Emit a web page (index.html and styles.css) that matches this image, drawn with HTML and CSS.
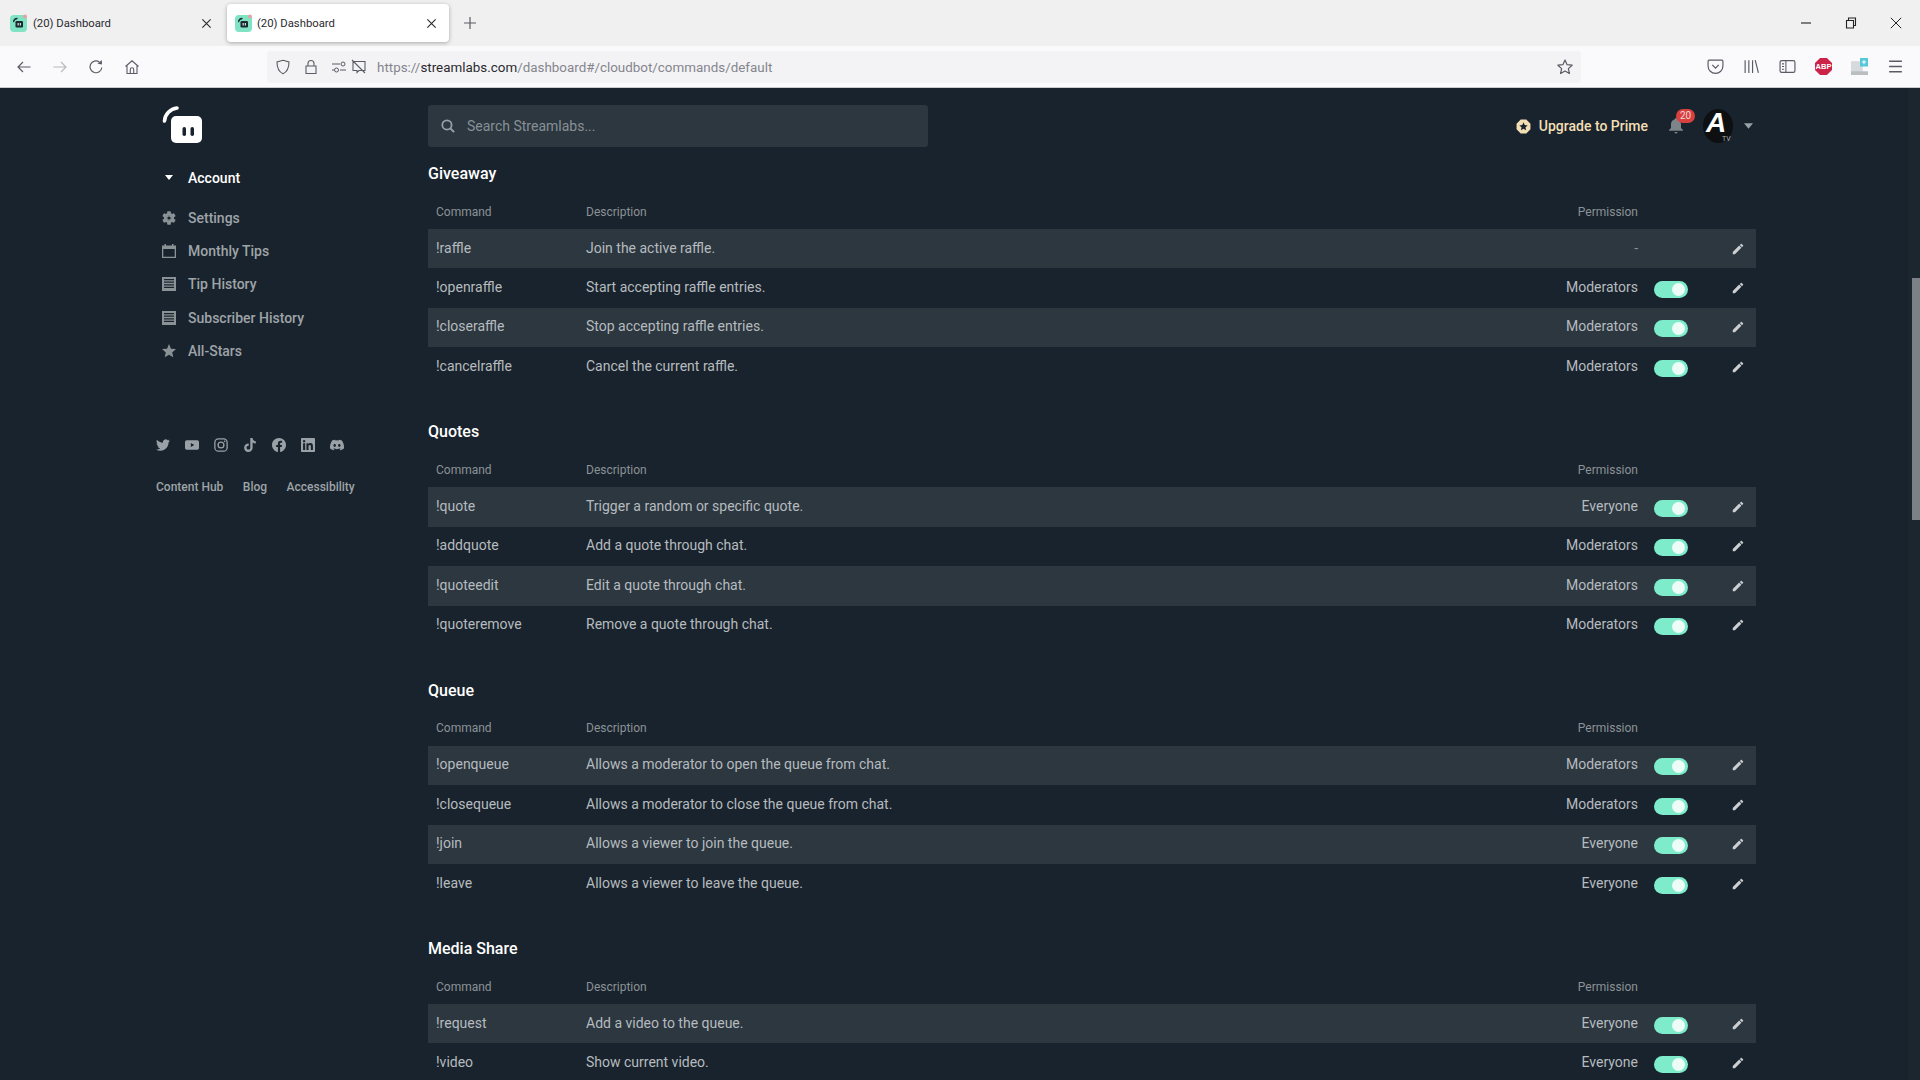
FILE: index.html
```html
<!DOCTYPE html>
<html lang="en">
<head>
<meta charset="utf-8">
<title>(20) Dashboard</title>
<link rel="stylesheet" href="styles.css">
</head>
<body>
<svg class="defs" aria-hidden="true">
  <symbol id="pencil" viewBox="0 0 24 24"><path d="M3 17.25V21h3.75L17.81 9.94l-3.75-3.75L3 17.25zM20.71 7.04c.39-.39.39-1.02 0-1.41l-2.34-2.34c-.39-.39-1.02-.39-1.41 0l-1.83 1.83 3.75 3.75 1.83-1.83z"/></symbol>
  <symbol id="list" viewBox="0 0 14 14"><path fill-rule="evenodd" d="M0 0h14v14H0zM2 2v1.2h10V2zM2 4.6v1.2h10V4.6zM2 7.2v1.2h10V7.2zM2 9.8V11h10V9.8z"/></symbol>
  <symbol id="favicon" viewBox="0 0 19 19"><rect y="1" width="17" height="17" rx="4" fill="#7fe3c4"/><rect x="5.500" y="7" width="7.500" height="6.500" rx="1.300" fill="#1b2a30"/><path d="M3.600 7.500A4 4 0 0 1 7 4.500" fill="none" stroke="#1b2a30" stroke-width="1.300" stroke-linecap="round"/><rect x="7.600" y="9" width="1.100" height="2.500" fill="#e8f5f1"/><rect x="9.800" y="9" width="1.100" height="2.500" fill="#e8f5f1"/><circle cx="15" cy="2.500" r="1.900" fill="#e8a0a0"/></symbol>
  <symbol id="close" viewBox="0 0 12 12"><path d="M1.500 1.500l9 9M10.500 1.500l-9 9" fill="none" stroke="currentColor" stroke-width="1.200"/></symbol>
</svg>

<header class="browser">
  <div class="tabbar">
    <div class="tab">
      <svg class="favicon"><use href="#favicon"/></svg>
      <span class="tab-title">(20) Dashboard</span>
      <svg class="tab-close"><use href="#close"/></svg>
    </div>
    <div class="tab tab-active">
      <svg class="favicon"><use href="#favicon"/></svg>
      <span class="tab-title">(20) Dashboard</span>
      <svg class="tab-close"><use href="#close"/></svg>
    </div>
    <svg class="new-tab" viewBox="0 0 14 14"><path d="M7 1v12M1 7h12" fill="none" stroke="#5b5b66" stroke-width="1.200"/></svg>
    <div class="window-controls">
      <svg class="win-ic" viewBox="0 0 12 12"><path d="M1 6h10" stroke="#222" stroke-width="1.100"/></svg>
      <svg class="win-ic" viewBox="0 0 12 12"><path d="M1.500 3.500h7v7.500h-7zM3.500 3.500V1h7v7.500H8.500" fill="none" stroke="#222" stroke-width="1.100"/></svg>
      <svg class="win-ic" viewBox="0 0 12 12"><path d="M.8.8l10.400 10.400M11.200.8L.8 11.200" fill="none" stroke="#222" stroke-width="1"/></svg>
    </div>
  </div>
  <div class="toolbar">
    <div class="nav-buttons">
      <svg class="tb-ic" viewBox="0 0 16 16"><path d="M14.500 8H2M7 3L2 8l5 5" fill="none" stroke="#5b5b66" stroke-width="1.200"/></svg>
      <svg class="tb-ic tb-dim" viewBox="0 0 16 16"><path d="M1.500 8H14M9 3l5 5-5 5" fill="none" stroke="#5b5b66" stroke-width="1.200"/></svg>
      <svg class="tb-ic" viewBox="0 0 16 16"><path d="M13.800 8.500A5.900 5.900 0 1 1 11.300 3" fill="none" stroke="#5b5b66" stroke-width="1.200"/><path d="M9.500 4.800L14 5.500 13.800 1z" fill="#5b5b66"/></svg>
      <svg class="tb-ic" viewBox="0 0 16 16"><path d="M1.500 7.500L8 1.800l6.500 5.700M3 6.500V14.500h10V6.500M6.300 14.500V10.500a1.700 1.700 0 0 1 3.400 0v4" fill="none" stroke="#5b5b66" stroke-width="1.100"/></svg>
    </div>
    <div class="urlbar">
      <svg class="url-ic" viewBox="0 0 16 16"><path d="M8 1.200l6 1.800c0 6-1.500 9.700-6 11.800C3.500 12.700 2 9 2 3z" fill="none" stroke="#5b5b66" stroke-width="1.100"/></svg>
      <svg class="url-ic url-lock" viewBox="0 0 16 16"><path d="M3 7h10v7.500H3zM5 7V4.500a3 3 0 0 1 6 0V7" fill="none" stroke="#5b5b66" stroke-width="1.100"/></svg>
      <svg class="url-ic url-perm" viewBox="0 0 16 16"><path d="M1 5h8M1 11h2M9 11h6" fill="none" stroke="#5b5b66" stroke-width="1.100"/><circle cx="12" cy="5" r="2" fill="none" stroke="#5b5b66"/><circle cx="5.500" cy="11" r="2" fill="none" stroke="#5b5b66"/></svg>
      <svg class="url-ic url-media" viewBox="0 0 16 16"><path d="M2 2.500h12v9H8l-2 2v-2H2zM1 1l13 13" fill="none" stroke="#5b5b66" stroke-width="1.100"/></svg>
      <span class="url-text">https://<b class="url-host">streamlabs.com</b>/dashboard#/cloudbot/commands/default</span>
      <svg class="url-star" viewBox="0 0 24 24"><path d="M12 2.800l2.800 6.100 6.700.7-5 4.500 1.400 6.600L12 17.400l-5.900 3.300 1.400-6.600-5-4.500 6.700-.7z" fill="none" stroke="#5b5b66" stroke-width="1.600" stroke-linejoin="round"/></svg>
    </div>
    <div class="extensions">
      <svg class="ext-ic" viewBox="0 0 16 16"><path d="M2 2h12a1 1 0 0 1 1 1v4.500a7 7 0 0 1-14 0V3a1 1 0 0 1 1-1z" fill="none" stroke="#5b5b66" stroke-width="1.100"/><path d="M5 6.500l3 3 3-3" fill="none" stroke="#5b5b66" stroke-width="1.200"/></svg>
      <svg class="ext-ic" viewBox="0 0 16 16"><path d="M2 2v12M5.500 2v12M9 2v12M11.500 2l3 12" fill="none" stroke="#5b5b66" stroke-width="1.100"/></svg>
      <svg class="ext-ic" viewBox="0 0 16 16"><rect x="1" y="2.500" width="14" height="11" rx="1.500" fill="none" stroke="#5b5b66" stroke-width="1.100"/><path d="M6.500 2.500v11M2.800 5.500h2M2.800 8h2M2.800 10.500h2" fill="none" stroke="#5b5b66"/></svg>
      <span class="abp">ABP</span>
      <svg class="ext-ic" viewBox="0 0 16 16"><path d="M0 3h11v13H0z" fill="#d5dadc"/><path d="M0 12.500h16V16H0z" fill="#b9bec1"/><rect x="8.500" y="0" width="7.500" height="8" fill="#55c8d8"/><path d="M12.200 1.800v4M10.200 3.800h4" stroke="#fff"/></svg>
      <svg class="ext-ic" viewBox="0 0 16 16"><path d="M2 3h12M2 8h12M2 13h12" fill="none" stroke="#5b5b66" stroke-width="1.400"/></svg>
    </div>
  </div>
</header>

<div class="page">
  <aside class="sidebar">
    <svg class="logo" viewBox="0 0 42 40"><rect x="9" y="11" width="31" height="27" rx="5" fill="#fff"/><rect x="20.500" y="22" width="3.500" height="9" rx="1.700" fill="#19232d"/><rect x="28.500" y="22" width="3.500" height="9" rx="1.700" fill="#19232d"/><path d="M2.500 16A14 14 0 0 1 15 3" fill="none" stroke="#fff" stroke-width="3.600" stroke-linecap="round"/></svg>
    <nav class="menu">
      <a class="menu-item menu-head"><svg class="menu-caret" viewBox="0 0 10 6"><path d="M1 0h8L5 5z" fill="#fff"/></svg><span>Account</span></a>
      <a class="menu-item"><svg class="menu-ic" viewBox="2 2 20 20"><path d="M19.140 12.940c.04-.3.06-.61.06-.94 0-.32-.02-.64-.07-.94l2.030-1.580c.18-.14.23-.41.12-.61l-1.920-3.320c-.12-.22-.37-.29-.59-.22l-2.390.96c-.5-.38-1.030-.7-1.620-.94l-.36-2.540c-.04-.24-.24-.41-.48-.41h-3.840c-.24 0-.43.17-.47.41l-.36 2.540c-.59.24-1.130.57-1.620.94l-2.390-.96c-.22-.08-.47 0-.59.22L2.740 8.870c-.12.21-.08.47.12.61l2.030 1.580c-.05.3-.09.63-.09.94s.02.64.07.94l-2.030 1.580c-.18.14-.23.41-.12.61l1.920 3.320c.12.22.37.29.59.22l2.390-.96c.5.38 1.030.7 1.620.94l.36 2.540c.05.24.24.41.48.41h3.840c.24 0 .44-.17.47-.41l.36-2.540c.59-.24 1.130-.56 1.620-.94l2.390.96c.22.08.47 0 .59-.22l1.920-3.320c.12-.22.07-.47-.12-.61l-2.010-1.580zM12 15.600c-1.980 0-3.600-1.620-3.600-3.600s1.620-3.600 3.600-3.600 3.600 1.620 3.600 3.600-1.620 3.600-3.600 3.600z"/><circle cx="12" cy="12" r="4"/><circle class="gear-hole" cx="12" cy="12" r="2.300"/></svg><span>Settings</span></a>
      <a class="menu-item"><svg class="menu-ic" viewBox="0 0 14 14"><path fill-rule="evenodd" d="M2.500 0h1.500v1.500h6V0h1.500v1.500H14V14H0V1.500h2.500zM1.300 5v7.700h11.400V5z"/></svg><span>Monthly Tips</span></a>
      <a class="menu-item"><svg class="menu-ic"><use href="#list"/></svg><span>Tip History</span></a>
      <a class="menu-item"><svg class="menu-ic"><use href="#list"/></svg><span>Subscriber History</span></a>
      <a class="menu-item"><svg class="menu-ic" viewBox="2 2 20 20"><path d="M12 17.270L18.180 21l-1.640-7.030L22 9.240l-7.190-.61L12 2 9.190 8.630 2 9.240l5.460 4.730L5.820 21z"/></svg><span>All-Stars</span></a>
    </nav>
    <div class="socials">
      <svg class="social" viewBox="0 0 24 24"><path d="M23.950 4.570a10 10 0 0 1-2.820.77 4.960 4.960 0 0 0 2.160-2.720c-.95.55-2 .95-3.120 1.180a4.920 4.920 0 0 0-8.380 4.480C7.690 8.100 4.070 6.130 1.640 3.160a4.820 4.820 0 0 0-.66 2.470c0 1.710.87 3.210 2.190 4.100a4.900 4.900 0 0 1-2.230-.62v.06a4.920 4.920 0 0 0 3.950 4.830c-.72.2-1.480.22-2.220.08a4.940 4.940 0 0 0 4.600 3.420A9.870 9.870 0 0 1 0 19.540a13.900 13.900 0 0 0 7.550 2.210c9.060 0 14-7.500 14-13.980 0-.21 0-.42-.02-.63A9.940 9.940 0 0 0 24 4.590z"/></svg>
      <svg class="social" viewBox="0 0 24 24"><path fill-rule="evenodd" d="M3 4h18a3 3 0 0 1 3 3v10a3 3 0 0 1-3 3H3a3 3 0 0 1-3-3V7a3 3 0 0 1 3-3zm7 4.500v7l6-3.500z"/></svg>
      <svg class="social" viewBox="0 0 24 24"><rect x="1.500" y="1.500" width="21" height="21" rx="6" fill="none" stroke="#9aa1a6" stroke-width="2.200"/><circle cx="12" cy="12" r="5" fill="none" stroke="#9aa1a6" stroke-width="2.200"/><circle cx="18.300" cy="5.700" r="1.400"/></svg>
      <svg class="social" viewBox="0 0 24 24"><path d="M12.500 0h4c.2 3 2 5.300 5.500 5.600v4c-2 0-3.900-.6-5.500-1.700v8.600c0 4.200-3.300 7.500-7.500 7.500S2 20.700 2 16.500 5.500 9 9.800 9.300v4.100c-2-.4-3.700 1.100-3.700 3.100 0 1.900 1.500 3.400 3.400 3.400s3-1.400 3-3.400z"/></svg>
      <svg class="social" viewBox="0 0 24 24"><path d="M24 12.070C24 5.400 18.630 0 12 0S0 5.400 0 12.070c0 6.030 4.390 11.020 10.130 11.930v-8.440H7.080v-3.490h3.050V9.410c0-3.020 1.790-4.690 4.530-4.690 1.310 0 2.690.24 2.690.24v2.970h-1.520c-1.490 0-1.950.93-1.950 1.890v2.250h3.330l-.53 3.490h-2.800V24C19.610 23.090 24 18.100 24 12.070z"/></svg>
      <svg class="social" viewBox="0 0 24 24"><path d="M20.450 20.450h-3.550v-5.570c0-1.330-.03-3.040-1.850-3.040-1.850 0-2.140 1.450-2.140 2.940v5.670H9.350V9h3.410v1.560h.05c.48-.9 1.640-1.850 3.370-1.850 3.600 0 4.270 2.370 4.270 5.460v6.280zM5.340 7.430a2.060 2.060 0 1 1 0-4.120 2.060 2.060 0 0 1 0 4.120zM7.120 20.450H3.560V9h3.560v11.450zM22.220 0H1.770C.79 0 0 .77 0 1.730v20.540C0 23.230.79 24 1.770 24h20.450c.98 0 1.780-.77 1.780-1.730V1.730C24 .77 23.200 0 22.220 0z"/></svg>
      <svg class="social" viewBox="0 0 24 24"><path d="M20.320 4.370A19.800 19.800 0 0 0 15.380 2.850a13.900 13.900 0 0 0-.63 1.300 18.300 18.300 0 0 0-5.490 0 12.600 12.600 0 0 0-.64-1.300A19.700 19.700 0 0 0 3.680 4.370C.53 9.050-.32 13.600.1 18.100a19.900 19.900 0 0 0 6.070 3.070c.49-.67.93-1.380 1.300-2.130-.71-.27-1.390-.6-2.030-.98.17-.12.34-.25.5-.38a14.200 14.200 0 0 0 12.120 0c.16.13.33.26.5.38-.64.38-1.330.71-2.040.98.38.75.82 1.460 1.300 2.130a19.900 19.900 0 0 0 6.080-3.070c.5-5.200-.84-9.720-3.580-13.730zM8.020 15.330c-1.180 0-2.160-1.080-2.160-2.420 0-1.330.96-2.420 2.160-2.420 1.210 0 2.180 1.090 2.160 2.420 0 1.340-.95 2.420-2.160 2.420zm7.970 0c-1.180 0-2.150-1.080-2.150-2.420 0-1.330.95-2.420 2.150-2.420 1.220 0 2.180 1.090 2.160 2.420 0 1.340-.94 2.420-2.160 2.420z"/></svg>
    </div>
    <div class="footer-links"><a>Content Hub</a><a>Blog</a><a>Accessibility</a></div>
  </aside>

  <main class="main">
    <div class="topbar">
      <div class="search">
        <svg class="search-ic" viewBox="0 0 16 16"><circle cx="6.800" cy="6.800" r="5.300" fill="none" stroke="#9aa1a6" stroke-width="2"/><path d="M10.800 10.800L15 15" stroke="#9aa1a6" stroke-width="2.200"/></svg>
        <span>Search Streamlabs...</span>
      </div>
      <div class="user-area">
        <svg class="prime-ic" viewBox="0 0 16 16"><path fill-rule="evenodd" d="M5 .6h6l4.400 4.400v6L11 15.400H5L.6 11V5zM8 3.500l1.300 3 3.200.3-2.400 2.100.7 3.100L8 10.400l-2.800 1.600.7-3.100-2.400-2.100 3.200-.3z" fill="#f3dfb5"/></svg>
        <span class="prime-text">Upgrade to Prime</span>
        <div class="bell">
          <svg class="bell-ic" viewBox="0 0 16 16"><path d="M8 0a1.200 1.200 0 0 1 1.200 1.200C11.500 1.800 13 3.700 13 6v4l2 2v.8H1V12l2-2V6c0-2.300 1.500-4.200 3.800-4.800A1.200 1.200 0 0 1 8 0zM6.500 14h3a1.500 1.500 0 0 1-3 0z" fill="#7d858a"/></svg>
          <span class="badge">20</span>
        </div>
        <div class="avatar"><span class="avatar-a">A</span><span class="avatar-tv">TV</span></div>
        <svg class="user-caret" viewBox="0 0 10 6"><path d="M0 0h10L5 6z" fill="#9aa1a6"/></svg>
      </div>
    </div>

    <section class="group group-first">
      <h2>Giveaway</h2>
      <div class="row row-head"><span>Command</span><span>Description</span><span class="perm">Permission</span></div>
      <div class="row"><span>!raffle</span><span>Join the active raffle.</span><span class="perm perm-none">-</span><i></i><svg class="edit"><use href="#pencil"/></svg></div>
      <div class="row"><span>!openraffle</span><span>Start accepting raffle entries.</span><span class="perm">Moderators</span><b class="toggle"></b><svg class="edit"><use href="#pencil"/></svg></div>
      <div class="row"><span>!closeraffle</span><span>Stop accepting raffle entries.</span><span class="perm">Moderators</span><b class="toggle"></b><svg class="edit"><use href="#pencil"/></svg></div>
      <div class="row"><span>!cancelraffle</span><span>Cancel the current raffle.</span><span class="perm">Moderators</span><b class="toggle"></b><svg class="edit"><use href="#pencil"/></svg></div>
    </section>

    <section class="group">
      <h2>Quotes</h2>
      <div class="row row-head"><span>Command</span><span>Description</span><span class="perm">Permission</span></div>
      <div class="row"><span>!quote</span><span>Trigger a random or specific quote.</span><span class="perm">Everyone</span><b class="toggle"></b><svg class="edit"><use href="#pencil"/></svg></div>
      <div class="row"><span>!addquote</span><span>Add a quote through chat.</span><span class="perm">Moderators</span><b class="toggle"></b><svg class="edit"><use href="#pencil"/></svg></div>
      <div class="row"><span>!quoteedit</span><span>Edit a quote through chat.</span><span class="perm">Moderators</span><b class="toggle"></b><svg class="edit"><use href="#pencil"/></svg></div>
      <div class="row"><span>!quoteremove</span><span>Remove a quote through chat.</span><span class="perm">Moderators</span><b class="toggle"></b><svg class="edit"><use href="#pencil"/></svg></div>
    </section>

    <section class="group">
      <h2>Queue</h2>
      <div class="row row-head"><span>Command</span><span>Description</span><span class="perm">Permission</span></div>
      <div class="row"><span>!openqueue</span><span>Allows a moderator to open the queue from chat.</span><span class="perm">Moderators</span><b class="toggle"></b><svg class="edit"><use href="#pencil"/></svg></div>
      <div class="row"><span>!closequeue</span><span>Allows a moderator to close the queue from chat.</span><span class="perm">Moderators</span><b class="toggle"></b><svg class="edit"><use href="#pencil"/></svg></div>
      <div class="row"><span>!join</span><span>Allows a viewer to join the queue.</span><span class="perm">Everyone</span><b class="toggle"></b><svg class="edit"><use href="#pencil"/></svg></div>
      <div class="row"><span>!leave</span><span>Allows a viewer to leave the queue.</span><span class="perm">Everyone</span><b class="toggle"></b><svg class="edit"><use href="#pencil"/></svg></div>
    </section>

    <section class="group">
      <h2>Media Share</h2>
      <div class="row row-head"><span>Command</span><span>Description</span><span class="perm">Permission</span></div>
      <div class="row"><span>!request</span><span>Add a video to the queue.</span><span class="perm">Everyone</span><b class="toggle"></b><svg class="edit"><use href="#pencil"/></svg></div>
      <div class="row"><span>!video</span><span>Show current video.</span><span class="perm">Everyone</span><b class="toggle"></b><svg class="edit"><use href="#pencil"/></svg></div>
    </section>
  </main>

  <div class="scrollbar"><div class="thumb"></div></div>
</div>
</body>
</html>
```

FILE: styles.css
```css
* { box-sizing: border-box; }
html, body { margin: 0; height: 100%; overflow: hidden; }
body { display: flex; flex-direction: column; background: #19232d; font-family: Roboto, "Liberation Sans", sans-serif; }
.defs { display: none; }

/* browser chrome */
.browser { flex: none; height: 88px; font-family: Roboto, "Noto Sans", sans-serif; border-bottom: 1px solid #c9cbce; }
.tabbar { height: 46px; background: #f0f0f1; display: flex; align-items: center; }
.tab { width: 222px; height: 38px; margin-left: 5px; display: flex; align-items: center; padding: 0 15px 0 5px; font-size: 11.3px; color: #2a2a2e; }
.tab + .tab { margin-left: 0; }
.tab-active { background: #fff; border-radius: 4px; box-shadow: 0 1px 4px rgba(0,0,0,.3); padding: 0 12px 0 8px; }
.favicon { width: 19px; height: 19px; flex: none; }
.tab-title { margin-left: 4px; padding-top: 1px; flex: 1; }
.tab-active .tab-title { margin-left: 3px; }
.tab-close { width: 11px; height: 11px; color: #2a2a2e; }
.new-tab { width: 14px; height: 14px; margin-left: 14px; }
.window-controls { margin-left: auto; display: flex; gap: 33px; padding-right: 18px; }
.win-ic { width: 12px; height: 12px; }

.toolbar { height: 41px; background: #fafafc; display: flex; align-items: center; }
.nav-buttons { width: 267px; padding-left: 16px; display: flex; gap: 20px; flex: none; }
.tb-ic { width: 16px; height: 16px; }
.tb-dim { opacity: .4; }
.urlbar { width: 1314px; height: 32px; background: #f3f3f6; border-radius: 4px; display: flex; align-items: center; padding-left: 8px; font-size: 13.4px; color: #85858d; flex: none; }
.url-ic { width: 16px; height: 16px; flex: none; }
.url-lock { margin-left: 12px; }
.url-perm { margin-left: 12px; }
.url-media { margin-left: 4px; }
.url-text { margin-left: 10px; padding-top: 2px; }
.url-host { font-weight: 400; color: #2a2a2e; }
.url-star { width: 18px; height: 18px; margin-left: auto; margin-right: 7px; }
.extensions { display: flex; align-items: center; gap: 19px; padding-left: 126px; }
.ext-ic { width: 17px; height: 17px; flex: none; }
.abp { width: 17px; height: 17px; background: #cc2448; clip-path: polygon(30% 0, 70% 0, 100% 30%, 100% 70%, 70% 100%, 30% 100%, 0 70%, 0 30%); color: #fff; font: 700 7.5px/17px "Liberation Sans", sans-serif; text-align: center; flex: none; }

/* page */
.page { flex: 1; display: flex; min-height: 0; overflow: hidden; }
.sidebar { width: 428px; flex: none; padding: 17px 0 0 156px; }
.logo { width: 42px; height: 40px; display: block; margin-left: 6px; }
.menu { display: flex; flex-direction: column; margin-top: 17px; }
.menu-item { height: 33.3px; display: flex; align-items: center; font-size: 14px; font-weight: 500; color: #9ea4a8; padding-left: 6px; }
.menu-item span { margin-left: 12px; }
.menu-head { color: #fff; height: 39px; padding-bottom: 7.5px; }
.menu-caret { width: 10px; height: 6px; margin: 0 2px; }
.menu-ic { width: 14px; height: 14px; fill: #8b9296; flex: none; }
.gear-hole { fill: #19232d; }
.socials { display: flex; gap: 15px; margin-top: 70.5px; align-items: center; }
.social { width: 14px; height: 14px; fill: #9aa1a6; flex: none; }
.footer-links { display: flex; gap: 19.5px; margin-top: 28.5px; font-size: 12px; font-weight: 500; color: #9ea4a8; }

.main { width: 1328px; flex: none; }
.topbar { display: flex; justify-content: space-between; align-items: center; height: 42px; margin-top: 17px; }
.search { width: 500px; height: 42px; background: #2c3740; border-radius: 3px; display: flex; align-items: center; padding-left: 13px; font-size: 14px; color: #889096; }
.search-ic { width: 14px; height: 14px; margin-right: 12px; }
.user-area { display: flex; align-items: center; padding-right: 3px; }
.prime-ic { width: 15px; height: 15px; }
.prime-text { font-size: 14px; font-weight: 500; color: #f3dfb5; margin-left: 8px; }
.bell { width: 41px; height: 34px; margin-left: 18px; position: relative; }
.bell-ic { width: 16px; height: 18px; position: absolute; left: 2px; top: 8px; }
.badge { position: absolute; left: 10px; top: 0; width: 19px; height: 14px; border-radius: 7px; background: #d9413f; color: #f4d7d7; font-size: 10px; line-height: 14px; text-align: center; }
.avatar { width: 30px; height: 34px; margin-left: -4px; background: #0e0f10; border-radius: 50%; position: relative; }
.avatar-a { position: absolute; left: 3px; top: 2px; height: 24px; font: italic 700 28px/24px "Liberation Sans", sans-serif; color: #fff; }
.avatar-tv { position: absolute; left: 19px; top: 27px; font-size: 7px; line-height: 7px; color: #aaa; }
.user-caret { width: 9px; height: 6px; margin-left: 11px; }

.group { margin-top: 35.8px; }
.group-first { margin-top: 17px; }
h2 { margin: 0; font-size: 16px; font-weight: 500; line-height: 20px; color: #fff; }
.row { height: 39.4px; display: grid; grid-template-columns: 150px 1fr 200px 50px 68px; align-items: center; padding-left: 8px; font-size: 14px; color: #b6bbbf; }
.row > span { padding-bottom: 2px; }
.row:nth-child(odd) { background: #2c3740; }
.row-head { height: 45px; padding-top: 12px; font-size: 12px; color: #8b9296; }
.perm { text-align: right; }
.perm-none { color: #8b9296; }
.toggle { display: block; width: 34px; height: 17px; margin: 3px 0 0 16px; background: #7eeccb; border-radius: 9px; position: relative; }
.toggle::after { content: ""; position: absolute; right: 3px; top: 2px; width: 13px; height: 13px; border-radius: 50%; background: #eefcf8; }
.edit { width: 14px; height: 14px; fill: #ccd0d3; justify-self: end; margin-right: 11px; }

.scrollbar { flex: 1; background: #1c262f; padding-left: 4px; margin-left: 152px; }
.thumb { margin-top: 190px; height: 242px; background: #7b8187; }
```
